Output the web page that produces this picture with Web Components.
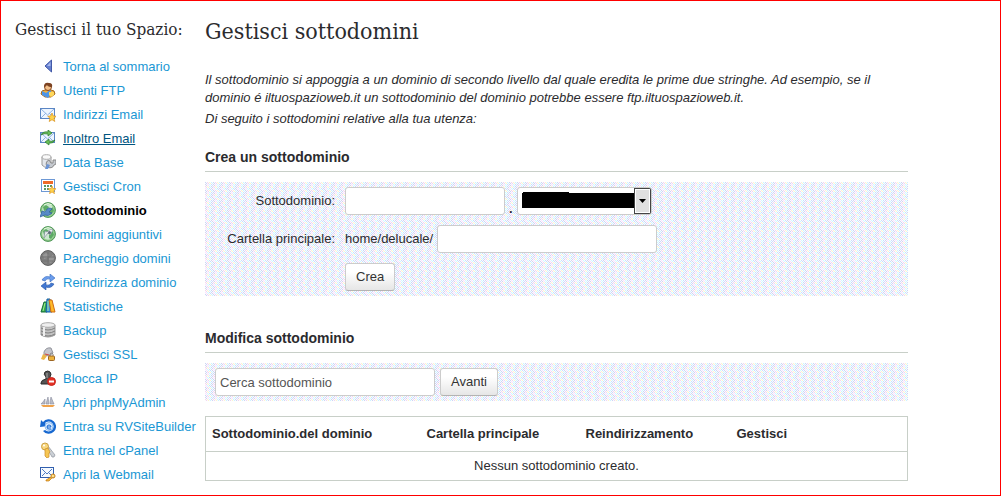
<!DOCTYPE html>
<html lang="it">
<head>
<meta charset="utf-8">
<title>Gestisci sottodomini</title>
<style>
html,body{margin:0;background:#fff}
body{font:13px/18px "Liberation Sans",Arial,sans-serif;color:#2b2b2e}
</style>
</head>
<body>
<hosting-page>
  <side-nav slot="nav" heading="Gestisci il tuo Spazio:">
    <nav-item icon="back">Torna al sommario</nav-item>
    <nav-item icon="user">Utenti FTP</nav-item>
    <nav-item icon="mail">Indirizzi Email</nav-item>
    <nav-item icon="forward" state="hovered">Inoltro Email</nav-item>
    <nav-item icon="database">Data Base</nav-item>
    <nav-item icon="cron">Gestisci Cron</nav-item>
    <nav-item icon="globe" state="current">Sottodominio</nav-item>
    <nav-item icon="addon">Domini aggiuntivi</nav-item>
    <nav-item icon="parked">Parcheggio domini</nav-item>
    <nav-item icon="redirect">Reindirizza dominio</nav-item>
    <nav-item icon="stats">Statistiche</nav-item>
    <nav-item icon="backup">Backup</nav-item>
    <nav-item icon="ssl">Gestisci SSL</nav-item>
    <nav-item icon="block">Blocca IP</nav-item>
    <nav-item icon="php">Apri phpMyAdmin</nav-item>
    <nav-item icon="builder">Entra su RVSiteBuilder</nav-item>
    <nav-item icon="key">Entra nel cPanel</nav-item>
    <nav-item icon="webmail">Apri la Webmail</nav-item>
  </side-nav>
  <page-intro heading="Gestisci sottodomini">
    <p>Il sottodominio si appoggia a un dominio di secondo livello dal quale eredita le prime due stringhe. Ad esempio, se il dominio é iltuospazioweb.it un sottodominio del dominio potrebbe essere ftp.iltuospazioweb.it.</p>
    <p>Di seguito i sottodomini relative alla tua utenza:</p>
  </page-intro>
  <page-section heading="Crea un sottodominio"><create-form></create-form></page-section>
  <page-section heading="Modifica sottodominio"><search-form></search-form><subdomain-table></subdomain-table></page-section>
</hosting-page>

<script>
const define = (name, render) => customElements.define(name, class extends HTMLElement {
  constructor() { super(); this.attachShadow({ mode: 'open' }); }
  connectedCallback() { this.shadowRoot.innerHTML = render(this); }
});

// 8x8 dither tile for the form panels: one tinted pixel in every second cell
const tints = ['#ccd4f5', '#ffddff', '#ccf5ff', '#d4d4ee', '#fff5cc', '#ccdcff', '#f5d4ee', '#ccffff'];
let cells = '';
for (let y = 0; y < 8; y++)
  for (let x = y % 2; x < 8; x += 2)
    cells += `<rect x="${x}" y="${y}" width="1" height="1" fill="${tints[(x * 3 + y * 5 + (y >> 1)) % 8]}"/>`;
const dither = 'data:image/svg+xml,' + encodeURIComponent(
  `<svg xmlns="http://www.w3.org/2000/svg" width="8" height="8" shape-rendering="crispEdges"><rect width="8" height="8" fill="#fafcff"/>${cells}</svg>`
).replace(/'/g, '%27');

const controls = `
  *{box-sizing:border-box}
  input,select{height:28px;margin:0;border:1px solid #ccc;border-radius:3px;background-color:#fff;padding:0 4px;font:inherit;color:#333;min-width:0}
  input::placeholder{color:#555;opacity:1}
  button{height:28px;margin:0;padding:0 10px;border:1px solid #ccc;border-bottom-color:#b3b3b3;border-radius:3px;background:linear-gradient(#fff,#fff 30%,#e6e6e6);font:inherit;color:#333}
  .panel{background:#eef1fa url("${dither}")}`;

const envelope = `<rect x=".5" y="2.500" width="14" height="10" fill="#edf5ff" stroke="#5b86c4"/><path d="M1 3l6.500 6L14 3M1 12l5-5M14 12L9 7" fill="none" stroke="#8fb3e3"/>`;
const globe = `<circle cx="8" cy="8" r="7.400" fill="#8fca86" stroke="#4c9457"/><circle cx="8" cy="8" r="5.800" fill="#cbe8cf"/><path d="M3 5l3-2 3 2-2 3-3 1zM9 8l4-3 1 4-3 4-2-1z" fill="#5cab65"/><path d="M4 3q4-3 8 0" stroke="#e4f8df" fill="none"/>`;
const icons = {
  back: `<path d="M11.500 2v12L5 8z" fill="#6680cf" stroke="#4259a8"/><path d="M10.500 4v4H7z" fill="#a8b9ee"/>`,
  user: `<path d="M1 12q0-4 4-4h6q4 0 4 4l-4 3H5z" fill="#f0b040" stroke="#a5691c"/><path d="M2 9l4 2 4-3 2 3-4 5-6-3z" fill="#4c95e8"/><circle cx="8" cy="5" r="3.500" fill="#f4c18b" stroke="#8a4b22"/><path d="M4 5q0-5 5-4 4 0 3 4Q8 5 7 3 6 5 4 5z" fill="#7c4322"/><path d="M9 10h5v3l-3 2-2-2z" fill="#ffd85c"/>`,
  mail: envelope + `<path d="M12 7l1.300 3 3 .200-2.300 2 .800 3.300-2.800-1.800-2.800 1.800.800-3.300-2.300-2 3-.200z" fill="#ffd34b" stroke="#d98f1b" stroke-width=".7"/>`,
  forward: envelope + `<path d="M1 5q2-4 7-3V0l4 3-4 3V4Q4 3 1 5zM15 10q-2 4-6 3v2l-4-3 4-3v2q3 1 6-1z" fill="#69bd56" stroke="#25772c" stroke-width=".7"/>`,
  database: `<path d="M2 3v8q5 5 9 0V3z" fill="#e3e6eb" stroke="#999"/><ellipse cx="6.500" cy="3" rx="4.500" ry="2.300" fill="#fafafa" stroke="#aaa"/><path d="M9 6a4 4 0 1 0 5 5l2-1V6h-3v3h-2z" fill="#c5c9cf" stroke="#888"/><path d="M5 15l2-5 3 1-2 4z" fill="#6c95d6"/>`,
  cron: `<rect x="1.500" y="1.500" width="13" height="12" fill="#fff" stroke="#6d98d5"/><path d="M3 3h10v3H3z" fill="#ef6a28"/><path d="M4 7h2v2H4zm3 0h2v2H7zm3 0h2v2h-2zM4 10h2v2H4zm3 0h2v2H7z" fill="#5b9563"/><path d="M12 8l1 2.500 3 .200-2.200 2 .700 3-2.500-1.700-2.500 1.700.700-3L8 10.700l3-.200z" fill="#ffd34b" stroke="#d98f1b" stroke-width=".6"/>`,
  globe: globe + `<path d="M0 15l2-6 3 1q3-6 7-3l-3 3 3 1q-4 4-7 2z" fill="#588bc7" stroke="#31609d" stroke-width=".7"/>`,
  addon: globe + `<path d="M4 12l4-5 2 2 3-5-2-1-4 3-2-1z" fill="#e9edf0" stroke="#88939d" stroke-width=".7"/><circle cx="9.500" cy="6.500" r="1.500" fill="#5c6974"/>`,
  parked: `<circle cx="8" cy="8" r="7.400" fill="#808080" stroke="#5d5d5d"/><path d="M3 5l3-2 3 2-2 3-3 1zM9 8l4-3 1 4-3 4-2-1z" fill="#989898"/><path d="M2 11h11M8 2v12M2 7h12" stroke="#707070"/>`,
  redirect: `<path d="M2 6q3-5 8-3V0l5 4-5 4V5Q6 4 5 7z" fill="#6c9dec" stroke="#3268bd" stroke-width=".6"/><path d="M14 10q-3 5-8 3v3l-5-4 5-4v3q4 1 5-2z" fill="#4379d3" stroke="#2755a3" stroke-width=".6"/>`,
  stats: `<path d="M1 14L4 4h3v10z" fill="#37a54a" stroke="#17713a"/><path d="M6 14L7 1h3l2 13z" fill="#3b91df" stroke="#17619d"/><path d="M9 2h3l3 12h-4z" fill="#ffba27" stroke="#cf6a12"/><path d="M3 13l2-8M8 3v10" stroke="#a3ed93"/>`,
  backup: `<path d="M1 3v10q7 4 14 0V3z" fill="#c2c2c2" stroke="#999"/><ellipse cx="8" cy="3" rx="7" ry="2.300" fill="#eee" stroke="#aaa"/><path d="M1 6q7 4 14 0M1 9q7 4 14 0M1 12q7 4 14 0" stroke="#808080" fill="none"/><path d="M4 5v9" stroke="#eee" stroke-width="2"/>`,
  ssl: `<path d="M4 6q2-5 7-4l2 5-4 3-5-1z" fill="#c4c5cb" stroke="#93959d"/><path d="M3 8l4 2-3 4-3-1z" fill="#edb749"/><path d="M5 8l4 1" stroke="#d4433a"/><path d="M10 10V8q2-2 3 0v2" fill="none" stroke="#888"/><rect x="8.500" y="10" width="6" height="4.500" rx="1" fill="#ecb33c" stroke="#9c6422"/>`,
  block: `<path d="M1 13q0-3 5-4V7Q3 4 5 2q3-2 5 0 2 2 0 5v2q4 1 4 4v1H1z" fill="#555" stroke="#2b2b2b"/><path d="M7 3v5" stroke="#aaa"/><circle cx="11.500" cy="11.500" r="4" fill="#e33125" stroke="#c9251c"/><path d="M9 10.500h5v2H9z" fill="#fff"/>`,
  php: `<path d="M1 10q3-3 4-5v5zm5 0q1-4 2-7l1 7zm4 0q0-4 1-7l3 7z" fill="#b7bac5" stroke="#898da0" stroke-width=".6"/><path d="M1 11h14l-2 2H3z" fill="#f0a249"/>`,
  builder: `<path d="M3 4a7.300 7.300 0 1 1 0 9l2-1a5 5 0 1 0 0-7l3 3-8 1 1-7z" fill="#1768d0"/><circle cx="9" cy="8.500" r="4" fill="#dcecff" stroke="#8dbcf0"/><path d="M7 9h4q0-2-2-2T7 9t2 2h2" fill="none" stroke="#1768d0"/>`,
  key: `<path d="M6 6l2-2 7 9-1 2h-2l-1-2z" fill="#cbd0d6" stroke="#8d929b" stroke-width=".7"/><circle cx="5" cy="4.500" r="3.500" fill="#f8d77e" stroke="#cba043"/><circle cx="4" cy="3.500" r="1" fill="#fff"/><path d="M5 7l3-1 2 4-1 1v4l-2 1-2-2z" fill="#f6c653" stroke="#c88b25" stroke-width=".7"/>`,
  webmail: `<rect x=".5" y="1.500" width="13" height="10" fill="#f5faff" stroke="#315fae"/><path d="M2 3l5 5 5-5M2 10l3-3M12 10L9 7" fill="none" stroke="#507cc3"/><circle cx="13" cy="10" r="2" fill="#ffe28a" stroke="#c47c16"/><path d="M11 11l-5 3v1h3l3-3" fill="#f3b63e" stroke="#c47c16" stroke-width=".7"/>`
};

define('hosting-page', () => `
  <style>
    :host{display:grid;grid-template-columns:204px minmax(0,1fr);box-sizing:border-box;min-height:100vh;border:1px solid #f00;padding-right:92px}
    main{display:flex;flex-direction:column}
  </style>
  <slot name="nav"></slot><main><slot></slot></main>`);

define('side-nav', el => `
  <style>
    :host{display:block;padding:19px 0 0 14px}
    h2{margin:0 0 16px;font:17px/18px "DejaVu Serif Condensed","DejaVu Serif",serif;white-space:nowrap}
    nav{display:flex;flex-direction:column;padding-left:25px}
  </style>
  <h2>${el.getAttribute('heading')}</h2><nav><slot></slot></nav>`);

define('nav-item', el => `
  <style>
    :host{display:block}
    a{display:flex;align-items:center;gap:7px;height:24px;color:#1a97d4;text-decoration:none;white-space:nowrap}
    svg{flex:none}
    span{line-height:24px;padding-top:2px}
    :host([state=hovered]) span{color:#005580;text-decoration:underline}
    :host([state=current]) a{color:#000;font-weight:bold}
  </style>
  <a href="#"><svg width="16" height="16" viewBox="0 0 16 16" aria-hidden="true">${icons[el.getAttribute('icon')]}</svg><span><slot></slot></span></a>`);

define('page-intro', el => `
  <style>
    :host{display:block;padding-top:17px}
    h1{margin:0 0 27px;font:23px/26px "DejaVu Serif Condensed","DejaVu Serif",serif}
    div{display:flex;flex-direction:column;gap:3px;font-style:italic}
    ::slotted(p){margin:0}
  </style>
  <h1>${el.getAttribute('heading')}</h1><div><slot></slot></div>`);

define('page-section', el => `
  <style>
    :host{display:block;padding-top:19px}
    :host(:last-of-type){padding-top:32px}
    h2{margin:0 0 10px;padding-bottom:4px;border-bottom:1px solid #c8cfc8;font:bold 14px/20px "Liberation Sans",Arial,sans-serif}
  </style>
  <h2>${el.getAttribute('heading')}</h2><slot></slot>`);

define('create-form', () => `
  <style>${controls}
    :host{display:block}
    form{display:grid;grid-template-columns:130px minmax(0,1fr);gap:10px;padding:5px 0}
    label{text-align:right;line-height:28px}
    div{display:flex;align-items:center;gap:4px}
    #sub{width:160px}
    #dir{width:220px}
    .dot{align-self:flex-end;line-height:12px;font-weight:bold}
    select{appearance:none;width:135px;background:
      linear-gradient(#000,#000) 5px 4px/46px 2px no-repeat,
      linear-gradient(#000,#000) 4px 5px/112px 15px no-repeat,
      url("data:image/svg+xml,%3Csvg xmlns='http://www.w3.org/2000/svg' width='17' height='26'%3E%3Crect x='.5' y='.5' width='16' height='25' fill='%23e0e0e0' stroke='%23444'/%3E%3Crect x='1.500' y='1.500' width='14' height='23' fill='none' stroke='%23fff'/%3E%3Cpath d='M5 11h7l-3.500 4z'/%3E%3C/svg%3E") right 0/17px 26px no-repeat,#fff}
    button{grid-column:2;justify-self:start}
  </style>
  <form class="panel">
    <label for="sub">Sottodominio:</label>
    <div><input id="sub" type="text"><span class="dot">.</span><select aria-label="Dominio"><option></option></select></div>
    <label for="dir">Cartella principale:</label>
    <div><span>home/delucale/</span><input id="dir" type="text"></div>
    <button type="button">Crea</button>
  </form>`);

define('search-form', () => `
  <style>${controls}
    :host{display:block}
    form{display:flex;gap:5px;padding:5px 10px}
    input{width:220px}
  </style>
  <form class="panel"><input type="text" aria-label="Cerca sottodominio" placeholder="Cerca sottodominio"><button type="button">Avanti</button></form>`);

define('subdomain-table', () => `
  <style>
    :host{display:block;margin-top:15px}
    table{width:100%;border-collapse:collapse;border:1px solid #c8cfc8;table-layout:fixed}
    th{text-align:left;height:35px;padding:0 6px;box-sizing:border-box}
    td{text-align:center;height:29px;padding:0;border-top:1px solid #c8cfc8;box-sizing:border-box}
  </style>
  <table>
    <colgroup><col style="width:215px"><col style="width:159px"><col style="width:151px"><col></colgroup>
    <thead><tr><th scope="col">Sottodominio.del dominio</th><th scope="col">Cartella principale</th><th scope="col">Reindirizzamento</th><th scope="col">Gestisci</th></tr></thead>
    <tbody><tr><td colspan="4">Nessun sottodominio creato.</td></tr></tbody>
  </table>`);
</script>
</body>
</html>
